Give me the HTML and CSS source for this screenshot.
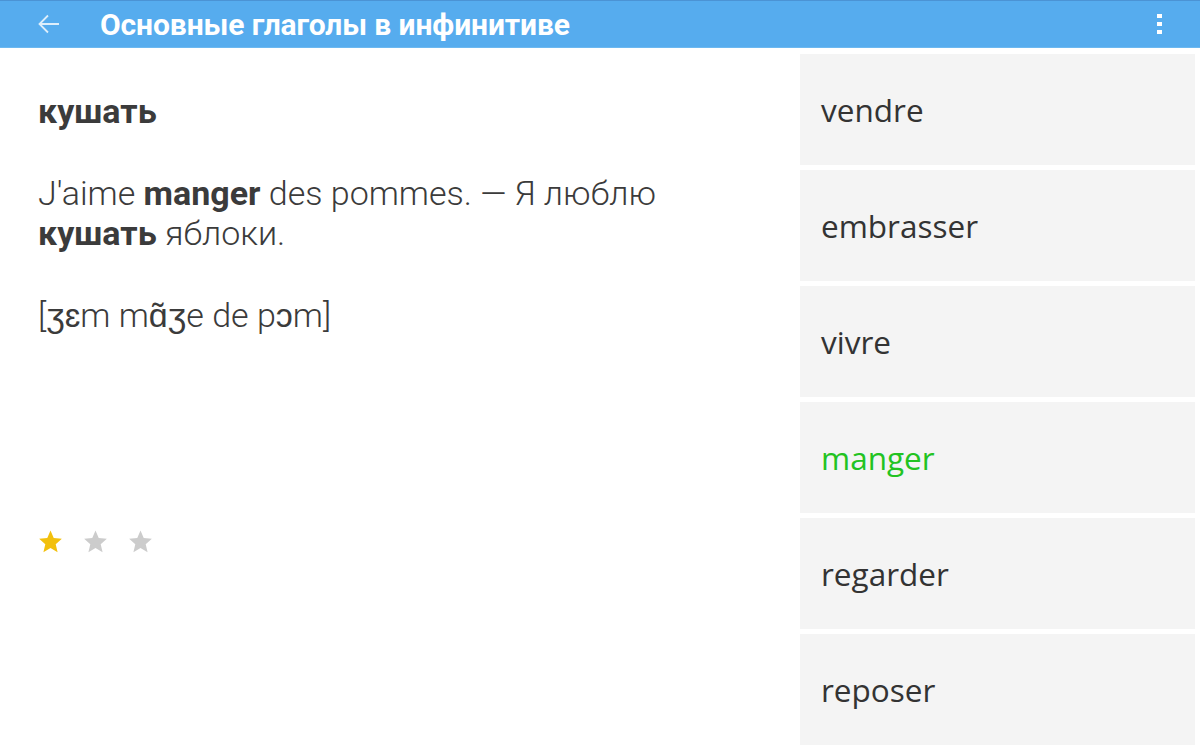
FILE: index.html
```html
<!DOCTYPE html>
<html lang="ru">
<head>
    <meta charset="UTF-8">
    <meta name="viewport" content="width=device-width, initial-scale=1.0">
    <title>Основные глаголы в инфинитиве</title>
    <link rel="stylesheet" href="styles.css">
</head>
<body>

    <div class="toolbar">
        <svg class="back" width="24" height="24" viewBox="0 0 24 24">
            <path d="M22 12H2.5M11 3.5L2.5 12L11 20.5" fill="none" stroke="#fff" stroke-width="1.8"/>
        </svg>
        <h1 class="title">Основные глаголы в инфинитиве</h1>
        <div class="menu">
            <span></span><span></span><span></span>
        </div>
    </div>

    <div class="main">
        <div class="card">
            <p class="word">кушать</p>
            <p class="example">J'aime <b>manger</b> des pommes. — Я люблю <b>кушать</b> яблоки.</p>
            <p class="ipa">[ʒɛm mɑ̃ʒe de pɔm]</p>

            <div class="stars">
                <svg class="star on" viewBox="0 0 24 24"><path d="M12 1.5l3.1 7.2 7.8.7-5.9 5.2 1.8 7.7L12 18.2l-6.8 4.1 1.8-7.7L1.1 9.4l7.8-.7z"/></svg>
                <svg class="star" viewBox="0 0 24 24"><path d="M12 1.5l3.1 7.2 7.8.7-5.9 5.2 1.8 7.7L12 18.2l-6.8 4.1 1.8-7.7L1.1 9.4l7.8-.7z"/></svg>
                <svg class="star" viewBox="0 0 24 24"><path d="M12 1.5l3.1 7.2 7.8.7-5.9 5.2 1.8 7.7L12 18.2l-6.8 4.1 1.8-7.7L1.1 9.4l7.8-.7z"/></svg>
            </div>
        </div>

        <div class="answers">
            <div class="answer">vendre</div>
            <div class="answer">embrasser</div>
            <div class="answer">vivre</div>
            <div class="answer correct">manger</div>
            <div class="answer">regarder</div>
            <div class="answer">reposer</div>
        </div>
    </div>

</body>
</html>
```

FILE: styles.css
```css
body {
    margin: 0;
    padding: 0;
    background: #ffffff;
    font-family: Roboto, "Liberation Sans", sans-serif;
    color: #3b3b3b;
    overflow: hidden;
}
.toolbar {
    height: 48px;
    box-sizing: border-box;
    background: #56acee;
    border-top: 1px solid #4b93d4;
    border-bottom: 1px solid #6cb8f0;
    display: flex;
    align-items: center;
    padding: 0 0 0 37px;
}
.back {
    opacity: 0.8;
}
.title {
    margin: 0 0 0 39px;
    font-size: 30px;
    font-weight: 700;
    color: #ffffff;
    flex: 1;
    letter-spacing: -0.1px;
}
.menu {
    display: flex;
    flex-direction: column;
    gap: 4px;
    width: 5px;
    margin-right: 38px;
}
.menu span {
    display: block;
    width: 5px;
    height: 4px;
    background: #ffffff;
}
.main {
    display: flex;
    height: 702px;
}
.card {
    flex: 1;
    padding: 43px 38px 0;
}
.card p {
    margin: 0;
    font-size: 34px;
    line-height: 40px;
    max-width: 680px;
}
.word {
    font-weight: 700;
}
.example {
    margin-top: 42px !important;
    font-weight: 300;
}
.example b {
    font-weight: 700;
}
.ipa {
    margin-top: 42px !important;
    font-weight: 300;
}
.stars {
    display: flex;
    gap: 20px;
    margin-top: 194px;
}
.star {
    width: 25px;
    height: 25px;
    fill: #cccccc;
}
.star.on {
    fill: #f2c00e;
}
.answers {
    width: 395px;
    margin-right: 5px;
    padding-top: 6px;
    display: flex;
    flex-direction: column;
    gap: 5px;
}
.answer {
    height: 111px;
    flex-shrink: 0;
    background: #f4f4f4;
    display: flex;
    align-items: center;
    padding-left: 21px;
    font-family: "Open Sans", "Noto Sans", sans-serif;
    font-size: 31.5px;
    color: #333333;
}
.answer.correct {
    color: #22c322;
}
```
